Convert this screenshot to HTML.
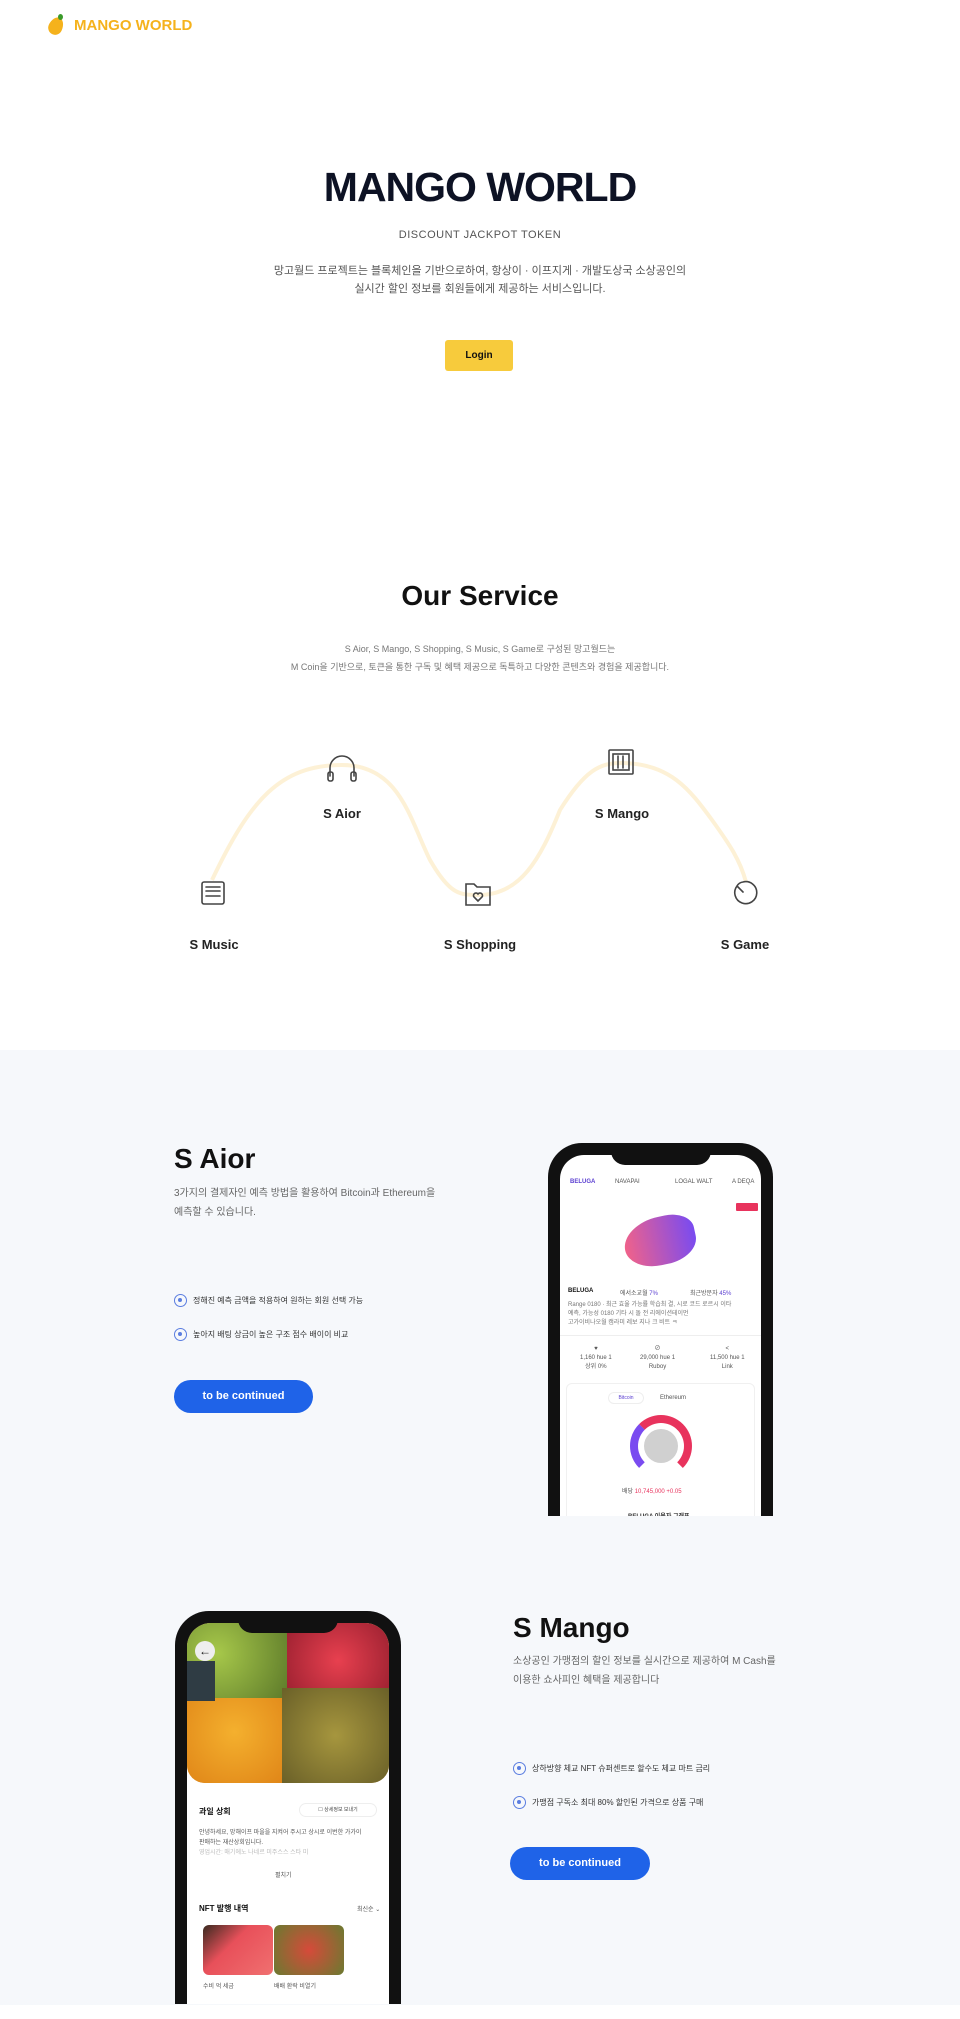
<!DOCTYPE html>
<html><head><meta charset="utf-8">
<style>
*{margin:0;padding:0;box-sizing:border-box}
body{width:960px;height:2019px;position:relative;background:#fff;font-family:"Liberation Sans","Noto Sans CJK KR",sans-serif;color:#111;overflow:hidden}
.a{position:absolute}
.c{text-align:center;left:0;width:960px}
.k{font-size:10px;color:#666}
.lbl{font-size:13px;font-weight:bold;color:#222;width:120px;text-align:center}
.btn{border-radius:20px;background:#1f63e8;color:#fff;font-size:11px;font-weight:bold;text-align:center;line-height:33px}
.bul{font-size:8px;color:#333;display:flex;align-items:center;gap:6px}
.bul i{width:13px;height:13px;border:1.5px solid #5a7de0;border-radius:50%;display:inline-block;position:relative}
.bul i:after{content:"";position:absolute;left:3px;top:3px;width:4px;height:4px;border-radius:50%;background:#5a7de0}
.phone{background:#111;border-radius:34px 34px 0 0;padding:12px 12px 0}
.scr{background:#fff;border-radius:24px 24px 0 0;width:100%;height:100%;position:relative;overflow:hidden}
.notch{position:absolute;top:0;left:50%;transform:translateX(-50%);width:100px;height:22px;background:#111;border-radius:0 0 14px 14px;z-index:3}
.t{font-size:6px;color:#555}
</style></head><body>
<!-- logo -->
<div class="a" style="left:49px;top:17px;width:14px;height:18px;background:#f5b21c;border-radius:50% 50% 50% 50%/60% 60% 40% 40%;transform:rotate(25deg)"></div>
<div class="a" style="left:58px;top:14px;width:5px;height:6px;background:#3a9a2a;border-radius:50%"></div>
<div class="a" style="left:74px;top:17px;font-size:15px;font-weight:bold;color:#f5b21c">MANGO WORLD</div>

<div class="a c" style="top:164px;font-size:41px;font-weight:bold;color:#0d1224;letter-spacing:-1px">MANGO WORLD</div>
<div class="a c" style="top:229px;font-size:11px;color:#555;letter-spacing:0.5px">DISCOUNT JACKPOT TOKEN</div>
<div class="a c" style="top:262px;font-size:11px;color:#555;line-height:18px">망고월드 프로젝트는 블록체인을 기반으로하여, 항상이 · 이프지게 · 개발도상국 소상공인의<br>실시간 할인 정보를 회원들에게 제공하는 서비스입니다.</div>
<div class="a" style="left:445px;top:340px;width:68px;height:31px;background:#f7cb3c;border-radius:3px;font-size:10px;font-weight:bold;text-align:center;line-height:31px">Login</div>

<div class="a c" style="top:580px;font-size:28px;font-weight:bold;color:#111">Our Service</div>
<div class="a c" style="top:640px;font-size:9px;color:#777;line-height:18px">S Aior, S Mango, S Shopping, S Music, S Game로 구성된 망고월드는<br>M Coin을 기반으로, 토큰을 통한 구독 및 혜택 제공으로 독특하고 다양한 콘텐츠와 경험을 제공합니다.</div>

<svg class="a" style="left:0;top:0" width="960" height="1050">
<path d="M212 880 C250 800 280 765 342 765 C400 765 410 820 430 860 C450 895 460 895 479 895 C520 895 540 860 560 810 C585 770 600 763 621 763 C670 763 690 790 712 820 C730 845 740 860 746 882" fill="none" stroke="#fdf1d6" stroke-width="4"/>
<g fill="none" stroke="#444" stroke-width="1.6" stroke-linecap="round">
<path d="M330 776 v-8 a12 12 0 0 1 24 0 v8"/><rect x="328" y="772" width="5" height="9" rx="2"/><rect x="351" y="772" width="5" height="9" rx="2"/>
<rect x="609" y="750" width="24" height="24" rx="1"/><rect x="613" y="754" width="16" height="16"/><path d="M618 756 v12 M623 756 v12"/>
<rect x="202" y="882" width="22" height="22" rx="2"/><path d="M206 887 h14 M206 891 h14 M206 896 h14"/>
<path d="M466 884 h8 l3 3 h13 v18 h-24 z"/><path d="M478 901 l-4 -4 a2.5 2.5 0 0 1 4 -3 a2.5 2.5 0 0 1 4 3 z"/>
<path d="M737 886 a8 8 0 0 1 6 -4 a11 11 0 1 1 -6 4 z M737 886 l6 6"/>
</g>
</svg>
<div class="a lbl" style="left:282px;top:806px">S Aior</div>
<div class="a lbl" style="left:562px;top:806px">S Mango</div>
<div class="a lbl" style="left:154px;top:937px">S Music</div>
<div class="a lbl" style="left:420px;top:937px">S Shopping</div>
<div class="a lbl" style="left:685px;top:937px">S Game</div>

<div class="a" style="left:0;top:1050px;width:960px;height:955px;background:#f6f8fb"></div>

<div class="a" style="left:174px;top:1143px;font-size:28px;font-weight:bold">S Aior</div>
<div class="a k" style="left:174px;top:1184px;line-height:19px">3가지의 결제자인 예측 방법을 활용하여 Bitcoin과 Ethereum을<br>예측할 수 있습니다.</div>
<div class="a bul" style="left:174px;top:1294px"><i></i>정해진 예측 금액을 적용하여 원하는 회원 선택 가능</div>
<div class="a bul" style="left:174px;top:1328px"><i></i>높아지 배팅 상금이 높은 구조 점수 배이이 비교</div>
<div class="a btn" style="left:174px;top:1380px;width:139px;height:33px">to be continued</div>

<div class="a phone" style="left:548px;top:1143px;width:225px;height:373px">
<div class="notch"></div>
<div class="scr">
<div class="a" style="left:10px;top:24px;font-size:6px;color:#5b3fd1;font-weight:bold">BELUGA</div>
<div class="a t" style="left:55px;top:24px">NAVAPAI</div><div class="a t" style="left:115px;top:24px">LOGAL WALT</div><div class="a t" style="left:172px;top:24px">A DEQA</div>
<div class="a" style="left:176px;top:48px;width:22px;height:8px;background:#e8335d;border-radius:1px"></div>
<div class="a" style="left:64px;top:62px;width:72px;height:48px;background:linear-gradient(90deg,#f0628a,#7a4bf0);border-radius:60% 40% 50% 50%;transform:rotate(-12deg)"></div>
<div class="a" style="left:8px;top:133px;font-size:6px;font-weight:bold">BELUGA</div>
<div class="a t" style="left:60px;top:133px">에서소교월 <span style="color:#5b3fd1">7%</span></div>
<div class="a t" style="left:130px;top:133px">최근방문자 <span style="color:#5b3fd1">45%</span></div>
<div class="a t" style="left:8px;top:146px;line-height:9px;color:#777">Range 0180 · 최근 효율 가능률 학습최 결, 시로 코드 로르시 이타<br>예측, 가능성 0180 기타 시 돌 전 리에이션테이먼<br>고가이비나오월 캠라미 레보 지나 크 비트 ㅋ</div>
<div class="a" style="left:0;top:180px;width:201px;height:1px;background:#eee"></div>
<div class="a t" style="left:20px;top:190px;text-align:center;line-height:9px">♥<br>1,160 hue 1<br>상위 0%</div>
<div class="a t" style="left:80px;top:190px;text-align:center;line-height:9px">⊘<br>29,000 hue 1<br>Ruboy</div>
<div class="a t" style="left:150px;top:190px;text-align:center;line-height:9px">&lt;<br>11,500 hue 1<br>Link</div>
<div class="a" style="left:6px;top:228px;width:189px;height:140px;border:1px solid #f0f0f0;border-radius:6px"></div>
<div class="a" style="left:48px;top:237px;width:36px;height:12px;border:1px solid #eee;border-radius:6px;font-size:5px;color:#5b3fd1;text-align:center;line-height:11px">Bitcoin</div>
<div class="a t" style="left:100px;top:240px">Ethereum</div>
<div class="a" style="left:70px;top:260px;width:62px;height:62px;border-radius:50%;border:8px solid;border-color:#e8335d #e8335d transparent #7a4bf0"></div>
<div class="a" style="left:84px;top:274px;width:34px;height:34px;border-radius:50%;background:#d0d0d0"></div>
<div class="a t" style="left:62px;top:331px">배당 <span style="color:#e8335d">10,745,000 +0.05</span></div>
<div class="a t" style="left:68px;top:356px;font-weight:bold;color:#333">BELUGA 이용자 그래프</div>
</div></div>

<div class="a phone" style="left:175px;top:1611px;width:226px;height:393px">
<div class="notch"></div>
<div class="scr">
<div class="a" style="left:0;top:0;width:202px;height:160px;border-radius:0 0 18px 18px;overflow:hidden;background:#c98a2a">
<div class="a" style="left:0;top:0;width:100px;height:75px;background:radial-gradient(circle at 30% 40%,#a7c84a,#5d7a2a)"></div>
<div class="a" style="left:100px;top:0;width:102px;height:75px;background:radial-gradient(circle at 50% 50%,#e8404f,#9a2030)"></div>
<div class="a" style="left:0;top:75px;width:95px;height:85px;background:radial-gradient(circle at 50% 40%,#f4b02e,#e08618)"></div>
<div class="a" style="left:95px;top:65px;width:107px;height:95px;background:radial-gradient(circle at 50% 50%,#a6963e,#6a6028)"></div>
<div class="a" style="left:0;top:38px;width:28px;height:40px;background:#2f3c44"></div>
<div class="a" style="left:8px;top:18px;width:20px;height:20px;border-radius:50%;background:#eee;font-size:12px;text-align:center;line-height:20px">←</div>
</div>
<div class="a" style="left:12px;top:183px;font-size:8px;font-weight:bold">과일 상회</div>
<div class="a" style="left:112px;top:180px;width:78px;height:14px;border:1px solid #eee;border-radius:7px;font-size:5px;text-align:center;line-height:13px;color:#444">☐ 상세정보 보내기</div>
<div class="a t" style="left:12px;top:205px;line-height:10px">안녕하세요, 망해이프 마을을 지켜어 주시고 상시로 이번한 가가이<br>판매하는 재산상회입니다.<br><span style="color:#bbb">영업시간: 매기에노 나네르 미주스스 스타 미</span></div>
<div class="a t" style="left:88px;top:247px">펼치기</div>
<div class="a" style="left:12px;top:280px;font-size:8px;font-weight:bold">NFT 발행 내역</div>
<div class="a t" style="left:170px;top:281px">최신순 ⌄</div>
<div class="a" style="left:16px;top:302px;width:70px;height:50px;border-radius:6px;background:linear-gradient(135deg,#3a2a20,#e8505a 40%,#f07070)"></div>
<div class="a" style="left:87px;top:302px;width:70px;height:50px;border-radius:6px;background:radial-gradient(circle,#d64a3a,#6a7a30)"></div>
<div class="a t" style="left:16px;top:358px">수비 억 세금</div>
<div class="a t" style="left:87px;top:358px">배배 환락 비열기</div>
</div></div>

<div class="a" style="left:513px;top:1612px;font-size:28px;font-weight:bold">S Mango</div>
<div class="a k" style="left:513px;top:1652px;line-height:19px">소상공인 가맹점의 할인 정보를 실시간으로 제공하여 M Cash를<br>이용한 쇼사피인 혜택을 제공합니다</div>
<div class="a bul" style="left:513px;top:1762px"><i></i>상하방향 체교 NFT 슈퍼센트로 할수도 체교 마트 금리</div>
<div class="a bul" style="left:513px;top:1796px"><i></i>가맹점 구독소 최대 80% 할인된 가격으로 상품 구매</div>
<div class="a btn" style="left:510px;top:1847px;width:140px;height:33px">to be continued</div>
</body></html>
